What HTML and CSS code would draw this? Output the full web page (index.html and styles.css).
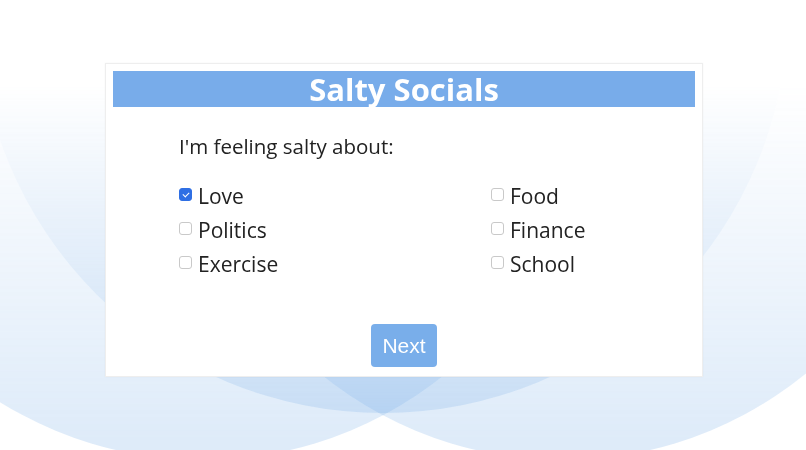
FILE: index.html
```html
<!DOCTYPE html>
<html lang="en">
<head>
<meta charset="utf-8">
<title>Salty Socials</title>
<link rel="stylesheet" href="styles.css">
</head>
<body>
<div class="backdrop" aria-hidden="true">
  <div class="circle circle-left"></div>
  <div class="circle circle-right"></div>
  <div class="circle circle-middle"></div>
</div>
<main class="card">
  <h1 class="title">Salty Socials</h1>
  <form class="form">
    <p class="question">I'm feeling salty about:</p>
    <div class="options">
      <label class="option"><input type="checkbox" checked><span>Love</span></label>
      <label class="option"><input type="checkbox"><span>Food</span></label>
      <label class="option"><input type="checkbox"><span>Politics</span></label>
      <label class="option"><input type="checkbox"><span>Finance</span></label>
      <label class="option"><input type="checkbox"><span>Exercise</span></label>
      <label class="option"><input type="checkbox"><span>School</span></label>
    </div>
    <div class="actions">
      <button type="button" class="next">Next</button>
    </div>
  </form>
</main>
</body>
</html>
```
FILE: styles.css
```css
html, body {
  margin: 0;
  padding: 0;
}
body {
  background: #ffffff;
  height: 450px;
  overflow: hidden;
  font-family: "Open Sans", "Noto Sans", sans-serif;
  color: #222;
}
.backdrop {
  position: fixed;
  inset: 0;
  z-index: -1;
  overflow: hidden;
  -webkit-mask-image: linear-gradient(to bottom, transparent 85px, #000 440px);
  mask-image: linear-gradient(to bottom, transparent 85px, #000 440px);
}
.circle {
  position: absolute;
  border-radius: 50%;
  background: rgba(100, 161, 227, 0.21);
}
.circle-left {
  left: -182px;
  top: -310px;
  width: 770px;
  height: 770px;
}
.circle-right {
  left: 178px;
  top: -310px;
  width: 770px;
  height: 770px;
}
.circle-middle {
  left: -22px;
  top: -397px;
  width: 810px;
  height: 810px;
}
.card {
  width: 582px;
  margin: 63px 0 0 105px;
  background: #fff;
  border: 1px solid #eeeeee;
  box-shadow: 0 0 2px rgba(0, 0, 0, 0.04);
  padding: 7px 7px 9px;
}
.title {
  margin: 0;
  height: 36px;
  background: #78acea;
  color: #fff;
  text-align: center;
  font-family: "Open Sans", sans-serif;
  font-weight: 700;
  font-size: 31px;
  line-height: 36px;
}
.form {
  padding: 0 0 0 66px;
}
.question {
  margin: 27px 0 0;
  font-size: 20.5px;
  line-height: 24px;
}
.options {
  display: grid;
  grid-template-columns: 312px 200px;
  margin-top: 24px;
  row-gap: 6px;
}
.option {
  display: flex;
  align-items: flex-start;
  gap: 6px;
  font-size: 21px;
  line-height: 28px;
}
.option input {
  appearance: none;
  -webkit-appearance: none;
  box-sizing: border-box;
  margin: 6px 0 0;
  width: 13px;
  height: 13px;
  border: 1px solid #c9c9c9;
  border-radius: 3px;
  background: #fff;
  position: relative;
  flex: none;
}
.option input:checked {
  background: #2f6fe4;
  border-color: #2f6fe4;
}
.option input:checked::after {
  content: "";
  position: absolute;
  left: 3.5px;
  top: 1.5px;
  width: 3px;
  height: 5px;
  border: solid #fff;
  border-width: 0 1.5px 1.5px 0;
  transform: rotate(45deg);
}
.actions {
  display: flex;
  justify-content: center;
  margin: 46px 0 0 -66px;
}
.next {
  width: 66px;
  height: 43px;
  border: none;
  border-radius: 4px;
  background: #79aeea;
  color: #fff;
  font-family: "Liberation Sans", Arial, sans-serif;
  font-size: 21px;
  padding: 0;
}
```
